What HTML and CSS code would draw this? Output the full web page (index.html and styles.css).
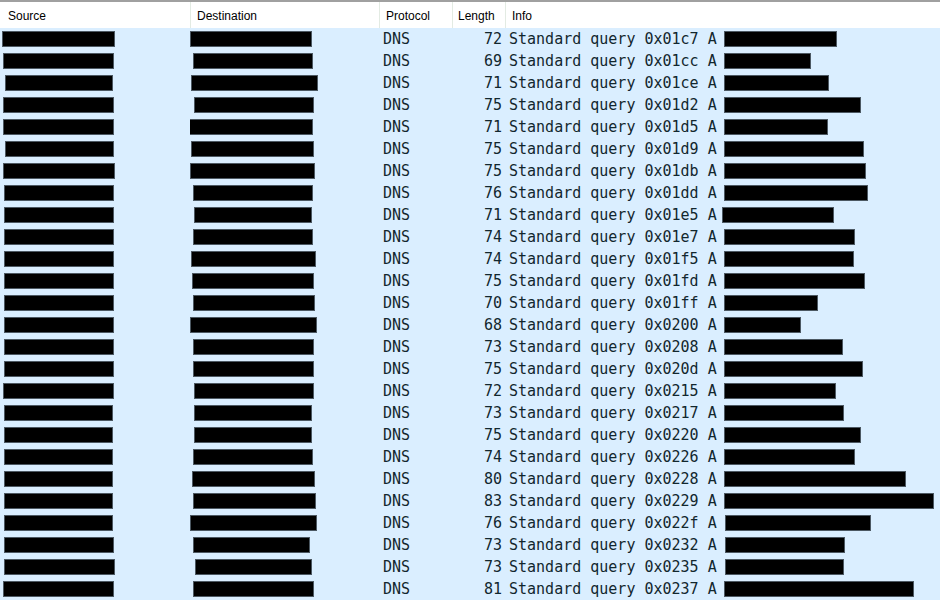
FILE: index.html
```html
<!DOCTYPE html>
<html lang="en">
<head>
    <meta charset="UTF-8">
    <title>Packet list</title>
    <link rel="stylesheet" href="styles.css">
</head>
<body>
    <div class="packet-list">
        <div class="header">
            <div class="col">Source</div>
            <div class="col">Destination</div>
            <div class="col">Protocol</div>
            <div class="col">Length</div>
            <div class="col">Info</div>
        </div>
        <div class="rows">
            <div class="row"><div class="cell"><span class="redact" style="margin-left:2px;width:113px"></span></div><div class="cell"><span class="redact" style="margin-left:0px;width:122px"></span></div><div class="cell proto">DNS</div><div class="cell len">72</div><div class="cell info">Standard query 0x01c7 A <span class="redact" style="width:113px"></span></div></div>
            <div class="row"><div class="cell"><span class="redact" style="margin-left:3px;width:111px"></span></div><div class="cell"><span class="redact" style="margin-left:3px;width:120px"></span></div><div class="cell proto">DNS</div><div class="cell len">69</div><div class="cell info">Standard query 0x01cc A <span class="redact" style="width:87px"></span></div></div>
            <div class="row"><div class="cell"><span class="redact" style="margin-left:5px;width:108px"></span></div><div class="cell"><span class="redact" style="margin-left:1px;width:127px"></span></div><div class="cell proto">DNS</div><div class="cell len">71</div><div class="cell info">Standard query 0x01ce A <span class="redact" style="width:105px"></span></div></div>
            <div class="row"><div class="cell"><span class="redact" style="margin-left:3px;width:111px"></span></div><div class="cell"><span class="redact" style="margin-left:4px;width:120px"></span></div><div class="cell proto">DNS</div><div class="cell len">75</div><div class="cell info">Standard query 0x01d2 A <span class="redact" style="width:137px"></span></div></div>
            <div class="row"><div class="cell"><span class="redact" style="margin-left:3px;width:111px"></span></div><div class="cell"><span class="redact" style="margin-left:-1px;width:124px"></span></div><div class="cell proto">DNS</div><div class="cell len">71</div><div class="cell info">Standard query 0x01d5 A <span class="redact" style="width:104px"></span></div></div>
            <div class="row"><div class="cell"><span class="redact" style="margin-left:5px;width:109px"></span></div><div class="cell"><span class="redact" style="margin-left:1px;width:123px"></span></div><div class="cell proto">DNS</div><div class="cell len">75</div><div class="cell info">Standard query 0x01d9 A <span class="redact" style="width:140px"></span></div></div>
            <div class="row"><div class="cell"><span class="redact" style="margin-left:3px;width:112px"></span></div><div class="cell"><span class="redact" style="margin-left:0px;width:125px"></span></div><div class="cell proto">DNS</div><div class="cell len">75</div><div class="cell info">Standard query 0x01db A <span class="redact" style="width:142px"></span></div></div>
            <div class="row"><div class="cell"><span class="redact" style="margin-left:4px;width:110px"></span></div><div class="cell"><span class="redact" style="margin-left:3px;width:120px"></span></div><div class="cell proto">DNS</div><div class="cell len">76</div><div class="cell info">Standard query 0x01dd A <span class="redact" style="width:144px"></span></div></div>
            <div class="row"><div class="cell"><span class="redact" style="margin-left:4px;width:110px"></span></div><div class="cell"><span class="redact" style="margin-left:4px;width:118px"></span></div><div class="cell proto">DNS</div><div class="cell len">71</div><div class="cell info">Standard query 0x01e5 A <span class="redact" style="width:112px;margin-left:-4px"></span></div></div>
            <div class="row"><div class="cell"><span class="redact" style="margin-left:4px;width:110px"></span></div><div class="cell"><span class="redact" style="margin-left:3px;width:120px"></span></div><div class="cell proto">DNS</div><div class="cell len">74</div><div class="cell info">Standard query 0x01e7 A <span class="redact" style="width:131px"></span></div></div>
            <div class="row"><div class="cell"><span class="redact" style="margin-left:4px;width:110px"></span></div><div class="cell"><span class="redact" style="margin-left:1px;width:125px"></span></div><div class="cell proto">DNS</div><div class="cell len">74</div><div class="cell info">Standard query 0x01f5 A <span class="redact" style="width:130px"></span></div></div>
            <div class="row"><div class="cell"><span class="redact" style="margin-left:4px;width:110px"></span></div><div class="cell"><span class="redact" style="margin-left:2px;width:122px"></span></div><div class="cell proto">DNS</div><div class="cell len">75</div><div class="cell info">Standard query 0x01fd A <span class="redact" style="width:141px"></span></div></div>
            <div class="row"><div class="cell"><span class="redact" style="margin-left:4px;width:110px"></span></div><div class="cell"><span class="redact" style="margin-left:3px;width:122px"></span></div><div class="cell proto">DNS</div><div class="cell len">70</div><div class="cell info">Standard query 0x01ff A <span class="redact" style="width:94px"></span></div></div>
            <div class="row"><div class="cell"><span class="redact" style="margin-left:4px;width:110px"></span></div><div class="cell"><span class="redact" style="margin-left:0px;width:127px"></span></div><div class="cell proto">DNS</div><div class="cell len">68</div><div class="cell info">Standard query 0x0200 A <span class="redact" style="width:77px"></span></div></div>
            <div class="row"><div class="cell"><span class="redact" style="margin-left:4px;width:110px"></span></div><div class="cell"><span class="redact" style="margin-left:3px;width:121px"></span></div><div class="cell proto">DNS</div><div class="cell len">73</div><div class="cell info">Standard query 0x0208 A <span class="redact" style="width:119px"></span></div></div>
            <div class="row"><div class="cell"><span class="redact" style="margin-left:4px;width:110px"></span></div><div class="cell"><span class="redact" style="margin-left:3px;width:121px"></span></div><div class="cell proto">DNS</div><div class="cell len">75</div><div class="cell info">Standard query 0x020d A <span class="redact" style="width:139px"></span></div></div>
            <div class="row"><div class="cell"><span class="redact" style="margin-left:3px;width:111px"></span></div><div class="cell"><span class="redact" style="margin-left:4px;width:120px"></span></div><div class="cell proto">DNS</div><div class="cell len">72</div><div class="cell info">Standard query 0x0215 A <span class="redact" style="width:112px"></span></div></div>
            <div class="row"><div class="cell"><span class="redact" style="margin-left:4px;width:109px"></span></div><div class="cell"><span class="redact" style="margin-left:4px;width:118px"></span></div><div class="cell proto">DNS</div><div class="cell len">73</div><div class="cell info">Standard query 0x0217 A <span class="redact" style="width:120px"></span></div></div>
            <div class="row"><div class="cell"><span class="redact" style="margin-left:4px;width:109px"></span></div><div class="cell"><span class="redact" style="margin-left:4px;width:118px"></span></div><div class="cell proto">DNS</div><div class="cell len">75</div><div class="cell info">Standard query 0x0220 A <span class="redact" style="width:137px"></span></div></div>
            <div class="row"><div class="cell"><span class="redact" style="margin-left:4px;width:109px"></span></div><div class="cell"><span class="redact" style="margin-left:3px;width:120px"></span></div><div class="cell proto">DNS</div><div class="cell len">74</div><div class="cell info">Standard query 0x0226 A <span class="redact" style="width:131px"></span></div></div>
            <div class="row"><div class="cell"><span class="redact" style="margin-left:4px;width:109px"></span></div><div class="cell"><span class="redact" style="margin-left:2px;width:123px"></span></div><div class="cell proto">DNS</div><div class="cell len">80</div><div class="cell info">Standard query 0x0228 A <span class="redact" style="width:182px"></span></div></div>
            <div class="row"><div class="cell"><span class="redact" style="margin-left:4px;width:109px"></span></div><div class="cell"><span class="redact" style="margin-left:3px;width:123px"></span></div><div class="cell proto">DNS</div><div class="cell len">83</div><div class="cell info">Standard query 0x0229 A <span class="redact" style="width:210px"></span></div></div>
            <div class="row"><div class="cell"><span class="redact" style="margin-left:4px;width:109px"></span></div><div class="cell"><span class="redact" style="margin-left:0px;width:127px"></span></div><div class="cell proto">DNS</div><div class="cell len">76</div><div class="cell info">Standard query 0x022f A <span class="redact" style="width:146px;margin-left:-1px"></span></div></div>
            <div class="row"><div class="cell"><span class="redact" style="margin-left:4px;width:110px"></span></div><div class="cell"><span class="redact" style="margin-left:3px;width:117px"></span></div><div class="cell proto">DNS</div><div class="cell len">73</div><div class="cell info">Standard query 0x0232 A <span class="redact" style="width:120px;margin-left:-1px"></span></div></div>
            <div class="row"><div class="cell"><span class="redact" style="margin-left:4px;width:111px"></span></div><div class="cell"><span class="redact" style="margin-left:5px;width:117px"></span></div><div class="cell proto">DNS</div><div class="cell len">73</div><div class="cell info">Standard query 0x0235 A <span class="redact" style="width:119px;margin-left:-1px"></span></div></div>
            <div class="row"><div class="cell"><span class="redact" style="margin-left:3px;width:111px"></span></div><div class="cell"><span class="redact" style="margin-left:3px;width:121px"></span></div><div class="cell proto">DNS</div><div class="cell len">81</div><div class="cell info">Standard query 0x0237 A <span class="redact" style="width:190px"></span></div></div>
        </div>
    </div>
</body>
</html>
```

FILE: styles.css
```css
:root {
    --row-bg: #daeeff;
    --row-fg: #12272e;
    --divider: #e3ebe3;
}
* { box-sizing: border-box; margin: 0; padding: 0; }
body {
    background: #fff;
    width: 940px; height: 600px; overflow: hidden;
}
.packet-list { width: 940px; }

.header {
    display: grid;
    grid-template-columns: 190px 189px 73px 53px 1fr;
    height: 28px;
    border-top: 2px solid #a0a0a0;
    background: #fff;
    font-family: "Liberation Sans", Arial, sans-serif;
    font-size: 12px; color: #000;
}
.header .col {
    display: flex; align-items: center;
    padding-left: 6px; padding-top: 2px;
    border-left: 1px solid var(--divider);
}
.header .col:first-child { border-left: none; padding-left: 8px; }
.header .col:nth-child(4) { padding-left: 5px; }

.row {
    display: grid;
    grid-template-columns: 190px 189px 73px 53px 1fr;
    height: 22px;
    background: var(--row-bg);
    color: var(--row-fg);
    font-family: "DejaVu Sans Mono", monospace;
    font-size: 15px;
}
.cell {
    display: flex; align-items: center;
    white-space: nowrap; overflow: hidden;
}
.proto { padding-left: 4px; }
.len { justify-content: flex-end; padding-right: 3px; }
.info { padding-left: 4px; white-space: pre; }
.info .redact { margin-left: -2px; }

.redact {
    display: inline-block;
    height: 16px;
    background: #000;
    border: 1px solid #4c5862;
    margin-top: -1px;
}
```
